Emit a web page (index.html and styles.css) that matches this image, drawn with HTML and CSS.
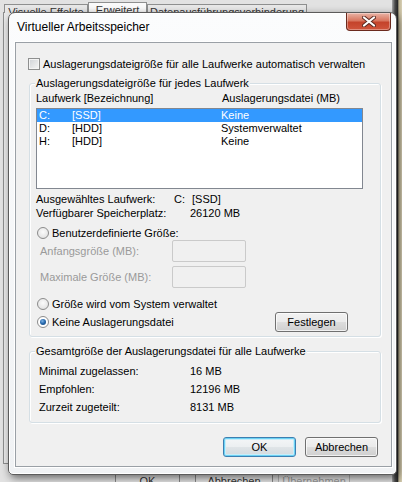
FILE: index.html
```html
<!DOCTYPE html>
<html lang="de">
<head>
    <meta charset="UTF-8">
    <meta name="viewport" content="width=device-width, initial-scale=1.0">
    <title>Virtueller Arbeitsspeicher</title>
    <link rel="stylesheet" href="styles.css">
</head>
<body>
    <div class="desk">
        <!-- parent window behind the dialog -->
        <div class="parent-panel"></div>
        <div class="parent-edge"></div>
        <div class="parent-tabs">
            <span class="ptab t1">Visuelle Effekte</span>
            <span class="ptab t2 sel">Erweitert</span>
            <span class="ptab t3">Datenausführungsverhinderung</span>
        </div>
        <div class="parent-buttons">
            <span class="pbtn b1">OK</span>
            <span class="pbtn b2">Abbrechen</span>
            <span class="pbtn b3 dis">Übernehmen</span>
        </div>

        <div class="dialog">
            <div class="titlebar">
                <span class="title">Virtueller Arbeitsspeicher</span>
                <span class="close">
                    <svg width="14" height="11" viewBox="0 0 14 11">
                        <path d="M2 1.5 L12 9.5 M12 1.5 L2 9.5" stroke="#5a2a22" stroke-width="4" stroke-linecap="round"/>
                        <path d="M2 1.5 L12 9.5 M12 1.5 L2 9.5" stroke="#fff" stroke-width="2.2" stroke-linecap="round"/>
                    </svg>
                </span>
            </div>
            <div class="client">
                <div class="check-row">
                    <span class="checkbox"></span>
                    <span>Auslagerungsdateigröße für alle Laufwerke automatisch verwalten</span>
                </div>

                <div class="group g1">
                    <span class="legend">Auslagerungsdateigröße für jedes Laufwerk</span>
                    <div class="list-head">
                        <span class="col-drive">Laufwerk [Bezeichnung]</span>
                        <span>Auslagerungsdatei (MB)</span>
                    </div>
                    <div class="listbox">
                        <div class="lrow sel"><span class="l1">C:</span><span class="l2">[SSD]</span><span>Keine</span></div>
                        <div class="lrow"><span class="l1">D:</span><span class="l2">[HDD]</span><span>Systemverwaltet</span></div>
                        <div class="lrow"><span class="l1">H:</span><span class="l2">[HDD]</span><span>Keine</span></div>
                    </div>
                    <div class="info first"><span class="info-label w1">Ausgewähltes Laufwerk:</span><span class="drv">C:</span><span>[SSD]</span></div>
                    <div class="info"><span class="info-label w2">Verfügbarer Speicherplatz:</span><span>26120 MB</span></div>
                    <div class="radio-row r-custom"><span class="radio"></span>Benutzerdefinierte Größe:</div>
                    <div class="size-row first"><span class="size-label">Anfangsgröße (MB):</span><span class="textbox"></span></div>
                    <div class="size-row"><span class="size-label">Maximale Größe (MB):</span><span class="textbox"></span></div>
                    <div class="radio-row r-system"><span class="radio"></span>Größe wird vom System verwaltet</div>
                    <div class="radio-row r-none">
                        <span class="radio on"></span>Keine Auslagerungsdatei
                        <span class="btn set">Festlegen</span>
                    </div>
                </div>

                <div class="group g2">
                    <span class="legend">Gesamtgröße der Auslagerungsdatei für alle Laufwerke</span>
                    <div class="total"><span class="total-label">Minimal zugelassen:</span><span>16 MB</span></div>
                    <div class="total"><span class="total-label">Empfohlen:</span><span>12196 MB</span></div>
                    <div class="total"><span class="total-label">Zurzeit zugeteilt:</span><span>8131 MB</span></div>
                </div>

                <div class="buttons">
                    <span class="btn default">OK</span>
                    <span class="btn">Abbrechen</span>
                </div>
            </div>
        </div>
    </div>
</body>
</html>
```

FILE: styles.css
```css
* { box-sizing: border-box; }
body { margin: 0; font-family: "Liberation Sans", Arial, sans-serif; font-size: 11px; color: #000; }

.desk { position: relative; width: 402px; height: 482px; overflow: hidden; background: #e2e2e2; }

/* parent window pieces */
.parent-panel { position: absolute; left: 3px; top: 12px; width: 380px; height: 452px; border: 1px solid #8e8f8f; background: #ececec; }
.parent-edge { position: absolute; right: 0; top: 0; width: 10px; height: 482px;
    background: linear-gradient(to right, #a9a9a9 0, #4a4a4a 30%, #2b2b2b 55%, #bfb595 70%, #d8d0b6 100%); }
.parent-tabs { position: absolute; left: 4px; top: 0; display: flex; align-items: flex-end; height: 13px; }
.ptab { height: 9px; border: 1px solid #8e8f8f; border-bottom: 0; background: #e8e8e8; color: #333; line-height: 14px; overflow: hidden; text-align: center; white-space: nowrap; }
.ptab.t1 { width: 84px; }
.ptab.t2 { width: 59px; }
.ptab.t3 { width: 160px; }
.ptab.sel { height: 11px; background: #fafafa; }
.parent-buttons { position: absolute; left: 115px; top: 468px; display: flex; }
.pbtn { height: 22px; border: 1px solid #8a8a8a; border-radius: 3px; background: #e6e6e6; text-align: center; line-height: 25px; color: #333; white-space: nowrap; }
.pbtn.b1 { width: 65px; }
.pbtn.b2 { width: 78px; margin-left: 15px; }
.pbtn.b3 { width: 72px; margin-left: 5px; }
.pbtn.dis { color: #9a9a9a; border-color: #b5b5b5; }

/* dialog window */
.dialog { position: absolute; left: 8px; top: 12px; width: 389px; height: 463px; border: 1px solid #5b5b5b; border-radius: 7px 7px 5px 5px;
    background: linear-gradient(#fbfcfd, #f0f2f4); box-shadow: 2px 3px 9px rgba(0, 0, 0, 0.55), inset 0 0 0 1px #fff; }
.titlebar { height: 29px; display: flex; justify-content: space-between; align-items: flex-start; padding-left: 8px; padding-right: 5px; }
.title { font-size: 12px; line-height: 28px; color: #000; }
.close { width: 45px; height: 18px; display: flex; align-items: center; justify-content: center; border: 1px solid #6b2a1e; border-top: 0; border-radius: 0 0 4px 4px;
    background: linear-gradient(#eab4a6 0%, #d8765f 45%, #c4432b 55%, #d0553c 100%); box-shadow: inset 0 0 0 1px rgba(255, 255, 255, 0.35); }

.client { margin-left: 6px; width: 377px; height: 425px; border: 1px solid #9aa0a6; background: #f0f0f0; box-shadow: 0 0 0 1px #fff; }

.check-row { display: flex; align-items: center; height: 13px; margin-top: 14px; margin-left: 12px; gap: 3px; }
.checkbox { width: 12px; height: 12px; border: 1px solid #8e8f8f; background: linear-gradient(135deg, #cfd2d6, #f6f6f6); box-shadow: inset 0 0 0 1px #f4f4f4; }

.group { position: relative; margin-left: 13px; width: 352px; border: 1px solid #d5dfe5; border-radius: 3px; box-shadow: inset 1px 1px 0 #fff, 1px 1px 0 #fff; }
.legend { position: absolute; left: 5px; top: -7px; line-height: 13px; padding: 0 1px; background: #f0f0f0; }
.g1 { margin-top: 13px; padding: 8px 0 4px 6px; }
.g2 { margin-top: 14px; padding: 10px 0 6px 9px; }

.list-head { display: flex; line-height: 13px; height: 13px; }
.col-drive { width: 186px; }
.listbox { margin-top: 3px; width: 327px; height: 81px; border: 1px solid #828790; background: #fff; }
.lrow { display: flex; height: 13px; line-height: 13px; padding-left: 2px; }
.lrow.sel { background: #3399ff; color: #fff; }
.l1 { width: 33px; }
.l2 { width: 149px; }

.info { display: flex; line-height: 14px; height: 14px; }
.info.first { margin-top: 3px; }
.info-label.w1 { width: 138px; }
.info-label.w2 { width: 154px; }
.drv { width: 18px; }

.radio-row { display: flex; align-items: center; height: 13px; gap: 3px; margin-left: 1px; }
.radio { width: 12px; height: 12px; border-radius: 50%; border: 1px solid #8b8b8b; background: radial-gradient(circle at 50% 40%, #fbfbfb, #dcdcdc); }
.radio.on { position: relative; background: #fff; }
.radio.on::after { content: ""; position: absolute; left: 2px; top: 2px; width: 6px; height: 6px; border-radius: 50%;
    background: radial-gradient(circle at 40% 35%, #7fb4e6 0, #2a6cb0 45%, #0f3d70 100%); }
.r-custom { margin-top: 6px; }
.r-system { margin-top: 9px; }
.r-none { margin-top: 2px; height: 20px; padding-right: 32px; }
.r-none .btn { margin-left: auto; }

.size-row { display: flex; align-items: center; height: 22px; margin-top: 4px; padding-left: 4px; color: #9a9a9a; }
.size-row.first { margin-top: 1px; }
.size-label { width: 132px; }
.textbox { width: 74px; height: 22px; border: 1px solid #cacaca; border-radius: 2px; background: #f0f0f0; }

.total { display: flex; line-height: 18px; height: 18px; }
.total-label { width: 151px; }

.buttons { display: flex; justify-content: flex-end; gap: 9px; margin-top: 14px; padding-right: 13px; }
.btn { width: 73px; height: 20px; display: flex; align-items: center; justify-content: center; border: 1px solid #707070; border-radius: 3px;
    background: linear-gradient(#f2f2f2 0%, #ebebeb 48%, #dddddd 52%, #cfcfcf 100%); box-shadow: inset 0 0 0 1px rgba(255, 255, 255, 0.7); }
.btn.default { border-color: #3c7fb1; background: linear-gradient(#f4f6f7 0%, #eceff1 48%, #dfe4e7 52%, #d3dade 100%); box-shadow: inset 0 0 0 1px #6cd2f4, inset 0 0 0 2px #c7edfa; }
```
